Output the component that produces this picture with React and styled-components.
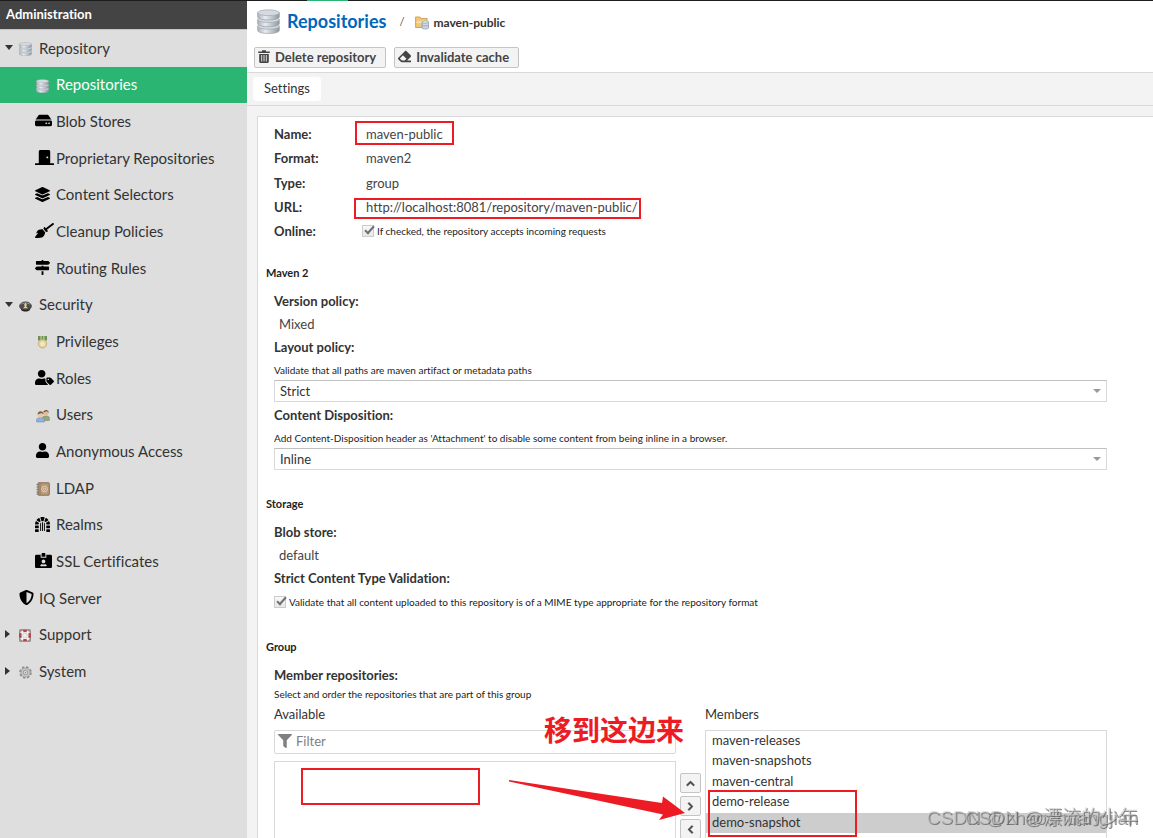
import React from "react";
import styled, { createGlobalStyle, css } from "styled-components";
import {
  FaHdd,
  FaDoorClosed,
  FaLayerGroup,
  FaBroom,
  FaMapSigns,
  FaUserTag,
  FaUser,
  FaDungeon,
  FaIdCardAlt,
  FaShieldAlt,
  FaEraser,
  FaFilter,
  FaChevronUp,
  FaChevronRight,
  FaChevronLeft,
} from "react-icons/fa";

const GlobalStyle = createGlobalStyle`
  *, *::before, *::after { box-sizing: border-box; }
  body {
    margin: 0;
    overflow: hidden;
    color: #333;
    background: #fff;
    font: 13px/20px Lato, "Noto Sans CJK SC", sans-serif;
    font-variant-ligatures: none;
  }
  button, input, select { font: inherit; font-variant-ligatures: none; color: inherit; margin: 0; }
  svg { display: block; flex: none; }
`;

/* ---------- shell ---------- */

const Shell = styled.div`
  display: grid;
  grid-template-columns: 247px minmax(0, 1fr);
  height: 100vh;
  overflow: hidden;
`;

const Sidebar = styled.aside`
  background: #dedede;
  overflow: hidden;
`;

const SidebarTitle = styled.h2`
  margin: 0;
  height: 30px;
  padding: 0 6px;
  border-top: 1px solid #1d1d1d;
  border-bottom: 1px solid #c4c4c4;
  background: #444;
  color: #fff;
  font-size: 13px;
  font-weight: 700;
  line-height: 27px;
`;

const Tree = styled.ul`
  list-style: none;
  margin: 0;
  padding: 0;
`;

const TreeItem = styled.li`
  height: 37px;
  &:nth-child(3n + 2) {
    height: 36px;
  }
`;

const TreeLink = styled.a`
  display: flex;
  align-items: center;
  height: 100%;
  padding: 0 0 2px ${(p) => (p.$child ? 35 : 5)}px;
  color: ${(p) => (p.$active ? "#fff" : "#333")};
  background: ${(p) => (p.$active ? "#2ab573" : "transparent")};
  font-size: 15px;
  text-decoration: none;
`;

const Caret = styled.span`
  width: 14px;
  flex: none;
  &::before {
    content: "";
    display: block;
    width: 0;
    border: 4px solid transparent;
    ${(p) =>
      p.$state === "open" &&
      css`
        border-top: 5px solid #333;
        border-bottom: 0;
      `}
    ${(p) =>
      p.$state === "closed" &&
      css`
        border-left: 5px solid #333;
        border-right: 0;
      `}
  }
`;

const IconSlot = styled.span`
  display: flex;
  flex: none;
  width: ${(p) => (p.$child ? 21 : 20)}px;
  padding-left: ${(p) => (p.$child && p.$picture ? 1 : 0)}px;
  padding-top: ${(p) => (p.$picture ? 3 : 0)}px;
  color: #000;
`;

/* ---------- header ---------- */

const Main = styled.main`
  display: flex;
  flex-direction: column;
  min-width: 0;
  overflow: hidden;
  background: #f3f3f3;
`;

const TopStrip = styled.div`
  flex: none;
  height: 1px;
  background: #1d1d1d;
  &::before {
    content: "";
    display: block;
    width: 41px;
    height: 1px;
    margin-left: 60px;
    background: #2ab573;
  }
`;

const Header = styled.header`
  flex: none;
  padding: 7px 7px 4px;
  background: #fff;
  border-bottom: 1px solid #d9d9d9;
`;

const Crumbs = styled.nav`
  display: flex;
  align-items: center;
  height: 26px;
  padding-left: 3px;
`;

const CrumbLink = styled.a`
  margin-left: 7px;
  color: #0067bd;
  font-size: 18px;
  font-weight: 700;
  text-decoration: none;
`;

const Slash = styled.span`
  margin: 2px 11px 0 13px;
  color: #555;
  font-size: 11px;
`;

const CurrentCrumb = styled.span`
  display: flex;
  align-items: center;
  gap: 4px;
  padding-top: 3px;
  font-size: 12px;
  font-weight: 700;
`;

const Toolbar = styled.div`
  display: flex;
  gap: 8px;
  margin-top: 13px;
`;

const ToolButton = styled.button`
  display: flex;
  align-items: center;
  gap: 5px;
  height: 21px;
  padding: 0 9px 2px 3px;
  border: 1px solid #c4c4c4;
  border-radius: 2px;
  background: #f3f3f3;
  color: #444;
  font-size: 13px;
  font-weight: 700;
`;

const Tabs = styled.div`
  flex: none;
  padding: 4px 6px;
  border-bottom: 1px solid #d9d9d9;
`;

const Tab = styled.button`
  display: block;
  height: 24px;
  padding: 0 11px 2px;
  border: 0;
  border-radius: 4px;
  background: #fff;
`;

/* ---------- form ---------- */

const Panel = styled.form`
  position: relative;
  flex: 1 0 auto;
  margin: 10px 0 0 10px;
  padding: 5px 46px 0 16px;
  border: solid #d9d9d9;
  border-width: 1px 0 0 1px;
  background: #fff;
`;

const Facts = styled.dl`
  margin: 0;
`;

const Fact = styled.div`
  display: grid;
  grid-template-columns: 92px 1fr;
  align-items: center;
  height: 24px;
  &:nth-child(3) {
    height: 25px;
  }
`;

const Term = styled.dt`
  font-weight: 700;
`;

const Value = styled.dd`
  margin: 0;
  color: #444;
`;

const CheckValue = styled(Value)`
  margin-left: -4px;
`;

const CheckLabel = styled.label`
  display: flex;
  align-items: center;
  gap: 3px;
  height: 22px;
  color: #222;
  font-size: 10px;
`;

const Checkbox = styled.input`
  appearance: none;
  position: relative;
  width: 12px;
  height: 12px;
  border: 1px solid #ccc;
  background: linear-gradient(#f8f8f8, #e8e8e8);
  &:checked::after {
    content: "";
    position: absolute;
    left: 4px;
    top: -2px;
    width: 5px;
    height: 10px;
    border: solid #707070;
    border-width: 0 2px 2px 0;
    transform: rotate(42deg);
  }
`;

const Section = styled.section`
  margin-top: ${(p) => (p.$first ? 22 : 26)}px;
`;

const SectionTitle = styled.h3`
  margin: 0 0 9px -8px;
  color: #222;
  font-size: 11px;
  font-weight: 700;
  line-height: 16px;
`;

const FieldLabel = styled.label`
  display: block;
  padding-bottom: ${(p) => (p.$compact ? 0 : 2)}px;
  font-weight: 700;
  line-height: 22px;
`;

const FieldValue = styled.div`
  padding: 0 0 2px 5px;
  color: #444;
  line-height: 20px;
`;

const Hint = styled.div`
  color: #222;
  font-size: 10px;
  line-height: ${(p) => (p.$compact ? 16 : 20)}px;
`;

const SelectWrap = styled.div`
  position: relative;
  margin-bottom: 2px;
  &::after {
    content: "";
    position: absolute;
    right: 6px;
    top: 9px;
    border: 4px solid transparent;
    border-top: 4px solid #999;
    border-bottom: 0;
    pointer-events: none;
  }
`;

const Select = styled.select`
  appearance: none;
  display: block;
  width: 100%;
  height: 22px;
  padding: 0 20px 2px 5px;
  border: 1px solid #d9d9d9;
  border-top-color: #c0c0c0;
  border-radius: 0;
  background: #fff;
`;

const Picker = styled.div`
  display: grid;
  grid-template-columns: 1fr 21px 1fr;
  column-gap: 4px;
  margin-top: 2px;
`;

const PickerTitle = styled.div`
  padding-bottom: 5px;
  line-height: 21px;
`;

const FilterBox = styled.label`
  display: flex;
  align-items: center;
  gap: 4px;
  height: 24px;
  margin-bottom: 7px;
  padding: 0 3px 2px;
  border: 1px solid #d9d9d9;
  border-radius: 2px;
  color: #808080;
`;

const FilterInput = styled.input`
  flex: 1;
  min-width: 0;
  padding: 0;
  border: 0;
  outline: 0;
  background: transparent;
  &::placeholder {
    color: #808080;
    opacity: 1;
  }
`;

const List = styled.ul`
  list-style: none;
  margin: 0;
  padding: 0;
  min-height: ${(p) => (p.$tall ? 180 : 150)}px;
  border: 1px solid #d9d9d9;
`;

const Option = styled.li`
  height: 20px;
  padding-left: 6px;
  line-height: 19px;
  background: ${(p) => (p.$selected ? "#cdcdcd" : "transparent")};
  &:nth-child(even) {
    height: 21px;
  }
`;

const MoveButtons = styled.div`
  display: flex;
  flex-direction: column;
  gap: 3px;
  padding-top: 69px;
`;

const MoveButton = styled.button`
  display: flex;
  align-items: center;
  justify-content: center;
  height: 20px;
  padding: 0;
  border: 1px solid #c4c4c4;
  border-radius: 2px;
  background: #f3f3f3;
  color: #444;
  svg {
    stroke-width: 40px;
  }
`;

/* ---------- mark-up drawn over the form ---------- */

const MarkBox = styled.div`
  position: absolute;
  left: ${(p) => p.$x}px;
  top: ${(p) => p.$y}px;
  width: ${(p) => p.$w}px;
  height: ${(p) => p.$h}px;
  border: 2px solid #ed1c24;
  pointer-events: none;
`;

const Note = styled.div`
  position: absolute;
  left: 286px;
  top: 592px;
  color: #ed1c24;
  font: 700 28px/40px "Noto Sans CJK SC", sans-serif;
  pointer-events: none;
`;

const Arrow = styled.svg`
  position: absolute;
  left: 250px;
  top: 662px;
  pointer-events: none;
`;

const Watermark = styled.div`
  position: fixed;
  right: 15px;
  bottom: 6px;
  color: rgba(200, 200, 200, 0.6);
  font: 19px/28px "Liberation Sans", "Noto Sans CJK SC", sans-serif;
  text-shadow: 1px 1px 0 rgba(90, 90, 90, 0.7);
  white-space: nowrap;
  pointer-events: none;
`;

/* ---------- drawings ---------- */

const DatabaseIcon = ({ width = 13, height = 14 }) => (
  <svg width={width} height={height} viewBox="0 0 22 24">
    <defs>
      <linearGradient id="disk" x1="0" x2="1">
        <stop offset="0" stopColor="#a9b1b9" />
        <stop offset=".35" stopColor="#e9edf1" />
        <stop offset="1" stopColor="#8d969f" />
      </linearGradient>
    </defs>
    {[15, 8.5, 2].map((y) => (
      <g key={y}>
        <path
          d={`M.6 ${y + 1.5}v4c0 2 4.600 3 10.400 3s10.400-1 10.400-3v-4z`}
          fill="url(#disk)"
          stroke="#9aa2aa"
          strokeWidth=".7"
        />
        <ellipse cx="11" cy={y + 1.6} rx="10.400" ry="2.800" fill="#d4dae0" stroke="#a8b0b8" strokeWidth=".8" />
      </g>
    ))}
  </svg>
);

const SecurityIcon = () => (
  <svg width="13" height="12" viewBox="0 0 13 12">
    <ellipse cx="6.500" cy="6" rx="6.400" ry="4.400" fill="#4b4b4b" />
    <path d="M1.500 8c2 2.500 8 2.500 10 0l-.8 2.300c-2 1.600-6.400 1.600-8.400 0z" fill="#222" />
    <path d="M1.800 4.500c2-2 7.400-2 9.400 0" stroke="#9a9a9a" fill="none" />
    <path d="M6.500 2.800l1.300 1.700-.5 2.200 1.900 1.500H3.800l1.900-1.500-.5-2.200z" fill="#e8cf92" />
  </svg>
);

const MedalIcon = () => (
  <svg width="13" height="14" viewBox="0 0 13 14">
    <path d="M2 1h9v4.500H2z" fill="#6f8f55" />
    <path d="M4.500 1h1.200v4H4.500zM7.300 1h1.200v4H7.300z" fill="#b9cfa0" />
    <circle cx="6.500" cy="8.800" r="4.200" fill="#e6d3a0" stroke="#c2a86e" strokeWidth=".8" />
    <circle cx="6.500" cy="8.800" r="2.200" fill="#f3e8c6" />
  </svg>
);

const UsersIcon = () => (
  <svg width="14" height="14" viewBox="0 0 14 14">
    <path d="M6.500 11V8.500C7 6.500 12.800 6.500 13.300 8.500V11.500H8z" fill="#93a878" stroke="#788c60" strokeWidth=".6" />
    <circle cx="10" cy="3.800" r="2.600" fill="#dcbf9c" />
    <path d="M7.300 3.500C7.300 0 12.800 0 12.800 3.500l-2-1.200z" fill="#745b43" />
    <path d="M.6 13V10.500c.5-2.500 7.400-2.500 7.900 0V13z" fill="#91b2dc" stroke="#6f8fb8" strokeWidth=".6" />
    <circle cx="4.500" cy="5.800" r="2.800" fill="#e4c8a7" />
    <path d="M1.500 5.500c0-4.500 6.200-4.500 6.200 0l-2-1.400z" fill="#7a6046" />
  </svg>
);

const BookIcon = () => (
  <svg width="14" height="14" viewBox="0 0 14 14">
    <rect x="2" y=".8" width="11.300" height="12.400" rx=".6" fill="#b79a78" stroke="#8a6d4e" />
    <path d="M4 1v12" stroke="#8a6d4e" strokeWidth=".8" />
    <path d="M.5 2.500h2.500M.5 5h2.500M.5 7.500h2.500M.5 10h2.500M.5 12h2.500" stroke="#777" strokeWidth=".9" />
    <circle cx="8.500" cy="7" r="2.900" fill="none" stroke="#eadbc4" strokeWidth=".8" />
    <circle cx="8.500" cy="7" r="1.100" fill="none" stroke="#eadbc4" strokeWidth=".7" />
  </svg>
);

const LifebuoyIcon = () => (
  <svg width="12" height="13" viewBox="0 0 12 13">
    <rect width="12" height="13" rx="1.500" fill="#9c9494" />
    <circle cx="6" cy="6.500" r="5.500" fill="#f4f0f0" />
    <g stroke="#b3484b" strokeWidth="3.400" fill="none">
      <path d="M1.800 4.200a4.600 4.600 0 0 0 0 4.600M10.200 4.200a4.600 4.600 0 0 1 0 4.600" strokeWidth="2.600" />
      <path d="M4.200 2.300a4.600 4.600 0 0 1 3.600 0M4.200 10.700a4.600 4.600 0 0 0 3.600 0" strokeWidth="2.200" />
    </g>
    <circle cx="6" cy="6.500" r="2.400" fill="#ededed" stroke="#aaa" strokeWidth=".4" />
  </svg>
);

const GearIcon = () => (
  <svg width="13" height="13" viewBox="0 0 13 13">
    <circle cx="6.500" cy="6.500" r="5.400" fill="none" stroke="#8e8e8e" strokeWidth="1.800" strokeDasharray="2.400 1.840" />
    <circle cx="6.500" cy="6.500" r="4.600" fill="#c6c6c6" stroke="#929292" strokeWidth=".7" />
    <circle cx="6.500" cy="6.500" r="2.200" fill="#dedede" stroke="#888" strokeWidth=".8" />
    <circle cx="6.500" cy="6.500" r=".7" fill="#888" />
  </svg>
);

const FolderIcon = () => (
  <svg width="14" height="14" viewBox="0 0 14 14">
    <path d="M.6 11.500V1h4.500l1 1.500h6v9z" fill="#f0c878" stroke="#d09c48" strokeWidth=".9" />
    <path d="M1.500 5.500h5l1-1.200H12V7H1.500z" fill="#fbe6b4" />
    <path d="M7 6v6c0 1.300 6.500 1.300 6.500 0V6z" fill="#cfd8e2" stroke="#8796a6" strokeWidth=".7" />
    <ellipse cx="10.250" cy="6" rx="3.250" ry="1.200" fill="#e9eef3" stroke="#8796a6" strokeWidth=".7" />
    <path d="M7 9c0 1.200 6.500 1.200 6.500 0" fill="none" stroke="#8796a6" strokeWidth=".7" />
  </svg>
);

const TrashIcon = () => (
  <svg width="12" height="13" viewBox="0 0 12 13">
    <path
      d="M4 .3h4V1.500h3.800v1.500H.2V1.500H4zM1.200 4h9.600v7.800c0 .7-.5 1.200-1.200 1.200H2.400c-.7 0-1.200-.5-1.200-1.200z"
      fill="#444"
    />
    <path d="M3.700 5v6.500M6 5v6.500M8.300 5v6.500" stroke="#f3f3f3" strokeWidth=".9" />
  </svg>
);

/* ---------- content ---------- */

const nodes = [
  { label: "Repository", state: "open", picture: true, icon: <DatabaseIcon /> },
  { label: "Repositories", child: true, active: true, picture: true, icon: <DatabaseIcon /> },
  { label: "Blob Stores", child: true, icon: <FaHdd size={17} /> },
  { label: "Proprietary Repositories", child: true, icon: <FaDoorClosed size={19} /> },
  { label: "Content Selectors", child: true, icon: <FaLayerGroup size={15} /> },
  { label: "Cleanup Policies", child: true, icon: <FaBroom size={19} /> },
  { label: "Routing Rules", child: true, icon: <FaMapSigns size={15} /> },
  { label: "Security", state: "open", picture: true, icon: <SecurityIcon /> },
  { label: "Privileges", child: true, picture: true, icon: <MedalIcon /> },
  { label: "Roles", child: true, icon: <FaUserTag size={19} /> },
  { label: "Users", child: true, picture: true, icon: <UsersIcon /> },
  { label: "Anonymous Access", child: true, icon: <FaUser size={15} /> },
  { label: "LDAP", child: true, picture: true, icon: <BookIcon /> },
  { label: "Realms", child: true, icon: <FaDungeon size={15} /> },
  { label: "SSL Certificates", child: true, icon: <FaIdCardAlt size={17} /> },
  { label: "IQ Server", icon: <FaShieldAlt size={15} /> },
  { label: "Support", state: "closed", picture: true, icon: <LifebuoyIcon /> },
  { label: "System", state: "closed", picture: true, icon: <GearIcon /> },
];

const members = ["maven-releases", "maven-snapshots", "maven-central", "demo-release", "demo-snapshot"];

const facts = [
  ["Name:", "maven-public"],
  ["Format:", "maven2"],
  ["Type:", "group"],
  ["URL:", "http://localhost:8081/repository/maven-public/"],
];

function SelectField({ id, label, hint, value }) {
  return (
    <>
      <FieldLabel htmlFor={id}>{label}</FieldLabel>
      <Hint>{hint}</Hint>
      <SelectWrap>
        <Select id={id} defaultValue={value}>
          <option>{value}</option>
        </Select>
      </SelectWrap>
    </>
  );
}

export default function App() {
  return (
    <Shell>
      <GlobalStyle />
      <Sidebar>
        <SidebarTitle>Administration</SidebarTitle>
        <Tree>
          {nodes.map((n) => (
            <TreeItem key={n.label}>
              <TreeLink href="#" $child={n.child} $active={n.active}>
                {!n.child && <Caret $state={n.state} />}
                <IconSlot $child={n.child} $picture={n.picture}>
                  {n.icon}
                </IconSlot>
                {n.label}
              </TreeLink>
            </TreeItem>
          ))}
        </Tree>
      </Sidebar>

      <Main>
        <TopStrip />
        <Header>
          <Crumbs>
            <DatabaseIcon width={23} height={25} />
            <CrumbLink href="#">Repositories</CrumbLink>
            <Slash>/</Slash>
            <CurrentCrumb>
              <FolderIcon />
              maven-public
            </CurrentCrumb>
          </Crumbs>
          <Toolbar>
            <ToolButton type="button">
              <TrashIcon />
              Delete repository
            </ToolButton>
            <ToolButton type="button">
              <FaEraser size={13} />
              Invalidate cache
            </ToolButton>
          </Toolbar>
        </Header>
        <Tabs>
          <Tab type="button">Settings</Tab>
        </Tabs>

        <Panel>
          <Facts>
            {facts.map(([term, value]) => (
              <Fact key={term}>
                <Term>{term}</Term>
                <Value>{value}</Value>
              </Fact>
            ))}
            <Fact>
              <Term>Online:</Term>
              <CheckValue>
                <CheckLabel>
                  <Checkbox type="checkbox" defaultChecked />
                  If checked, the repository accepts incoming requests
                </CheckLabel>
              </CheckValue>
            </Fact>
          </Facts>

          <Section $first>
            <SectionTitle>Maven 2</SectionTitle>
            <FieldLabel as="div">Version policy:</FieldLabel>
            <FieldValue>Mixed</FieldValue>
            <SelectField
              id="layout-policy"
              label="Layout policy:"
              hint="Validate that all paths are maven artifact or metadata paths"
              value="Strict"
            />
            <SelectField
              id="content-disposition"
              label="Content Disposition:"
              hint="Add Content-Disposition header as 'Attachment' to disable some content from being inline in a browser."
              value="Inline"
            />
          </Section>

          <Section>
            <SectionTitle>Storage</SectionTitle>
            <FieldLabel as="div">Blob store:</FieldLabel>
            <FieldValue>default</FieldValue>
            <FieldLabel htmlFor="strict-validation">Strict Content Type Validation:</FieldLabel>
            <CheckLabel>
              <Checkbox id="strict-validation" type="checkbox" defaultChecked />
              Validate that all content uploaded to this repository is of a MIME type appropriate for the repository
              format
            </CheckLabel>
          </Section>

          <Section>
            <SectionTitle>Group</SectionTitle>
            <FieldLabel as="div" $compact>
              Member repositories:
            </FieldLabel>
            <Hint $compact>Select and order the repositories that are part of this group</Hint>
            <Picker>
              <div>
                <PickerTitle>Available</PickerTitle>
                <FilterBox>
                  <FaFilter size={14} />
                  <FilterInput type="text" placeholder="Filter" aria-label="Filter" />
                </FilterBox>
                <List aria-label="Available" />
              </div>
              <MoveButtons>
                <MoveButton type="button" aria-label="Move up">
                  <FaChevronUp size={9} />
                </MoveButton>
                <MoveButton type="button" aria-label="Add to members">
                  <FaChevronRight size={9} />
                </MoveButton>
                <MoveButton type="button" aria-label="Remove from members">
                  <FaChevronLeft size={9} />
                </MoveButton>
              </MoveButtons>
              <div>
                <PickerTitle>Members</PickerTitle>
                <List $tall role="listbox" aria-label="Members">
                  {members.map((m) => (
                    <Option
                      key={m}
                      role="option"
                      $selected={m === "demo-snapshot"}
                      aria-selected={m === "demo-snapshot"}
                    >
                      {m}
                    </Option>
                  ))}
                </List>
              </div>
            </Picker>
          </Section>

          <MarkBox $x={97} $y={4} $w={99} $h={24} />
          <MarkBox $x={96} $y={81} $w={287} $h={21} />
          <MarkBox $x={43} $y={651} $w={179} $h={37} />
          <MarkBox $x={450} $y={673} $w={149} $h={47} />
          <Note>移到这边来</Note>
          <Arrow width="180" height="44" viewBox="0 0 180 44">
            <path d="M1 1 154 24 155 17.500 177 34 151 41 155 35.500 1 2.500z" fill="#ed1c24" />
          </Arrow>
        </Panel>
      </Main>

      <Watermark>CSDN @zhaoshuangjian</Watermark>
      <Watermark>CSDN @漂流的少年</Watermark>
    </Shell>
  );
}
